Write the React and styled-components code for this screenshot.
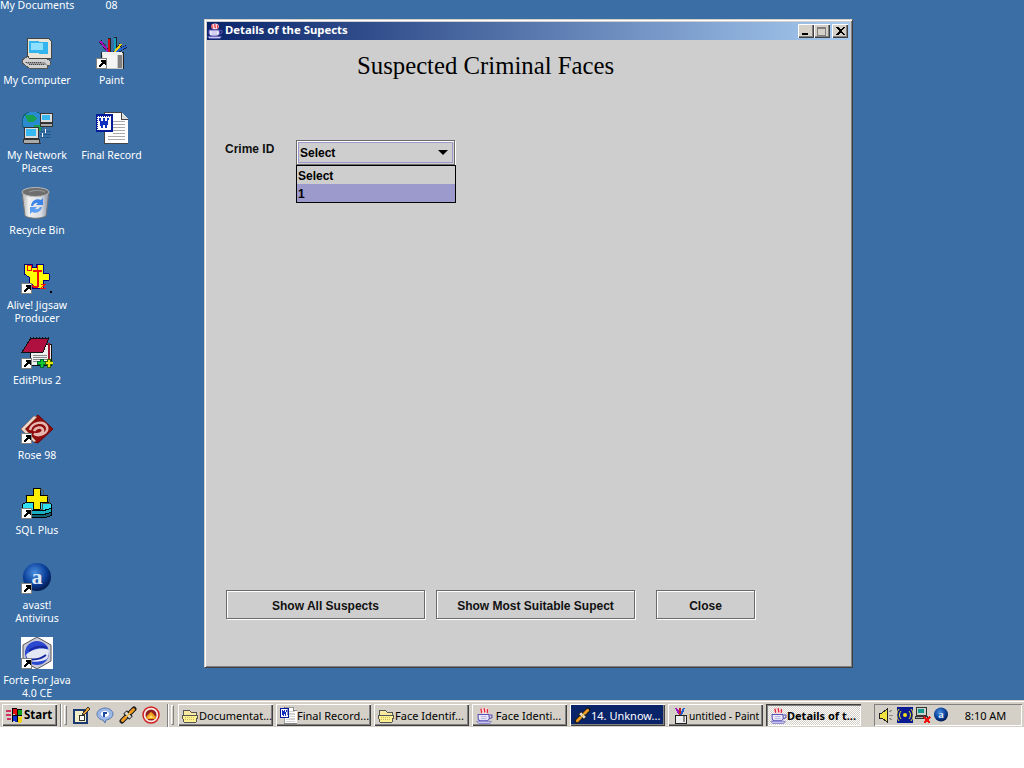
import React from "react";
import styled, { createGlobalStyle } from "styled-components";

const UI = `"Noto Sans", "DejaVu Sans", sans-serif`;

const Global = createGlobalStyle`
  html, body { margin: 0; padding: 0; background: #fff; }
  body { width: 1024px; height: 768px; overflow: hidden; font-family: ${UI}; }
`;

const Screen = styled.div`
  width: 1024px; height: 768px; display: flex; flex-direction: column; background: #fff; overflow: hidden;
`;
const Desktop = styled.div`
  position: relative; height: 700px; flex: none; background: #3a6ea5; overflow: hidden;
`;
const IconGrid = styled.div`
  display: grid; grid-template-columns: 74px 75px; grid-template-rows: repeat(10, 75px);
  grid-auto-flow: column; width: 149px; margin-top: -45px;
`;
const DeskItem = styled.div`
  display: flex; flex-direction: column; align-items: center; padding-top: 7px; box-sizing: border-box;
`;
const DeskIconBox = styled.div`
  position: relative; width: 32px; height: 32px; margin-bottom: 5px; flex: none;
  svg { display: block; }
`;
const DeskLabel = styled.div`
  width: 74px; color: #fff; text-align: center; font: 10.5px/13px ${UI}; white-space: pre;
`;
const ShortcutBadge = styled.span`
  position: absolute; left: 0; bottom: 0; width: 11px; height: 11px; background: #fff; display: flex;
  svg { display: block; }
`;

const Win = styled.div`
  position: absolute; left: 204px; top: 19px; width: 649px; height: 649px; box-sizing: border-box;
  background: #cecece; border: 1px solid; border-color: #d4d0c8 #404040 #404040 #d4d0c8;
  box-shadow: inset 1px 1px 0 #fff, inset -1px -1px 0 #808080;
  padding: 2px; display: flex; flex-direction: column;
`;
const TitleBar = styled.div`
  height: 18px; flex: none; display: flex; align-items: center; padding: 0 2px 0 0; gap: 2px;
  background: linear-gradient(90deg, #0a246a, #a6caf0);
`;
const TitleText = styled.div`
  flex: 1; color: #fff; font: bold 11.35px/16px ${UI}; white-space: nowrap; padding-bottom: 2px;
`;
const CaptionButtons = styled.div`display: flex; align-items: center;`;
const CaptionBtn = styled.div`
  width: 16px; height: 14px; box-sizing: border-box; background: #d4d0c8; display: flex;
  align-items: center; justify-content: center; margin-left: ${p => p.$gap || 0}px;
  box-shadow: inset 1px 1px 0 #fff, inset -1px -1px 0 #404040, inset -2px -2px 0 #808080;
  svg { display: block; }
`;
const Content = styled.div`
  flex: 1; display: flex; flex-direction: column; padding: 0 0 46px 18px; min-height: 0;
`;
const Heading = styled.h1`
  margin: 11px 0 0 132px; font: normal 24.75px/30px "Liberation Serif", serif; color: #000; white-space: nowrap;
`;
const FormRow = styled.div`
  display: flex; align-items: flex-start; margin-top: 59px;
`;
const FieldLabel = styled.div`
  width: 71px; font: bold 12px/14px "Liberation Sans", sans-serif; color: #111; padding-top: 2px;
`;
const ComboWrap = styled.div`position: relative; width: 159px;`;
const Combo = styled.div`
  height: 25px; box-sizing: border-box; border: 1px solid #6a6a6a; padding: 1px; box-shadow: inset 1px 1px 0 #fff, 1px 1px 0 #fff;
`;
const ComboInner = styled.div`
  height: 100%; box-sizing: border-box; border: 1px solid #9c99cc; display: flex; align-items: center;
  justify-content: space-between; padding: 0 4px 0 1px; font: bold 12px/14px "Liberation Sans", sans-serif; color: #000;
`;
const Arrow = styled.span`
  width: 0; height: 0; border-left: 5px solid transparent; border-right: 5px solid transparent; border-top: 5px solid #000;
`;
const Popup = styled.div`
  position: absolute; left: 0; top: 25px; width: 160px; height: 38px; box-sizing: border-box;
  border: 1px solid #000; background: #cecece;
`;
const PopupRow = styled.div`
  height: 18px; padding-left: 1px; font: bold 12px/20px "Liberation Sans", sans-serif; color: #000;
  background: ${p => (p.$active ? "#9c99cc" : "transparent")};
`;
const ButtonRow = styled.div`
  display: flex; margin-top: auto; margin-left: 1px;
`;
const JButton = styled.div`
  width: ${p => p.$w}px; height: 29px; box-sizing: border-box; margin-right: ${p => p.$mr || 0}px; padding-top: 2px;
  border: 1px solid #6a6a6a; box-shadow: inset 1px 1px 0 #fff, 1px 1px 0 #fff; display: flex;
  align-items: center; justify-content: center; font: bold 12px/14px "Liberation Sans", sans-serif; color: #111;
`;

const Taskbar = styled.div`
  height: 27px; flex: none; box-sizing: border-box; background: #d4d0c8; border-top: 1px solid #d4d0c8;
  box-shadow: inset 0 1px 0 #fff; display: flex; align-items: center; padding: 2px 2px 0 2px;
`;
const raised = `box-shadow: inset 1px 1px 0 #fff, inset -1px -1px 0 #404040, inset -2px -2px 0 #808080;`;
const StartBtn = styled.div`
  width: 55px; height: 22px; box-sizing: border-box; ${raised} display: flex; align-items: center; gap: 1px;
  padding-left: 4px; font: bold 11.5px/14px ${UI}; color: #000; flex: none;
  svg { display: block; }
`;
const Separator = styled.div`
  width: 2px; height: 23px; flex: none; margin-left: ${p => p.$ml}px; background: linear-gradient(90deg, #808080 50%, #fff 50%);
`;
const Grip = styled.div`
  width: 3px; height: 20px; flex: none; margin-left: ${p => p.$ml}px; box-sizing: border-box; border: 1px solid; border-color: #fff #808080 #808080 #fff;
`;
const Quick = styled.div`
  display: flex; gap: 5px; margin-left: 6px; flex: none; width: 88px; svg { display: block; }
`;
const TaskButtons = styled.div`display: flex; gap: 3px; margin-left: 4px; flex: none;`;
const TaskBtn = styled.div`
  width: 95px; height: 22px; box-sizing: border-box; display: flex; align-items: center; gap: 0;
  padding: 1px 0 0 4px; white-space: pre; overflow: hidden;
  font: ${p => (p.$pressed ? "bold " : "")}${p => p.$fs || 11}px/14px ${UI};
  color: ${p => (p.$flash ? "#fff" : "#000")};
  background: ${p => (p.$flash ? "#0a246a" : "#d4d0c8")};
  ${p => p.$pressed
    ? `background-color:#fff; background-image: conic-gradient(#d4d0c8 25%, #fff 0 50%, #d4d0c8 0 75%, #fff 0); background-size: 2px 2px;
       box-shadow: inset 1px 1px 0 #404040, inset 2px 2px 0 #808080, inset -1px -1px 0 #fff;`
    : raised}
  svg { display: block; flex: none; }
`;
const Tray = styled.div`
  width: 148px; height: 22px; margin-left: 13px; box-sizing: border-box; flex: none; display: flex; align-items: center;
  padding-left: 4px; box-shadow: inset 1px 1px 0 #808080, inset -1px -1px 0 #fff;
  svg { display: block; flex: none; }
`;
const TrayIcons = styled.div`display: flex; gap: 2px;`;
const Clock = styled.div`
  flex: 1; text-align: center; font: 11px/14px ${UI}; color: #000; padding: 1px 4px 0;
`;

const S = ({ size = 32, vb = 32, crisp = true, children }) => (
  <svg width={size} height={size} viewBox={`0 0 ${vb} ${vb}`} shapeRendering={crisp ? "crispEdges" : "auto"}>{children}</svg>
);

const Badge = () => (
  <ShortcutBadge>
    <svg width="11" height="11" viewBox="0 0 11 11" shapeRendering="crispEdges">
      <rect x=".5" y=".5" width="10" height="10" fill="#fff" stroke="#808080" />
      <path d="M5 2h5v5H8.500V5.500L4 9.500 2.500 8 6.500 4H5z" fill="#000" />
    </svg>
  </ShortcutBadge>
);

const Computer = () => (
  <S>
    <path d="M1 23l6-4h16l6 5v4l-3 1v2H8l-7-5z" fill="#cfcfcf" stroke="#555" />
    <path d="M6 1l22 1 2 2v17l-22 0-2-3z" fill="#e8e4d8" stroke="#444" />
    <path d="M8 4l19 1v12l-19-1z" fill="#35b5f0" />
    <path d="M10 6l12 0v7l-12 0z" fill="#8fe0ff" />
    <path d="M3 25h20l4 3H9z" fill="#999" />
    <path d="M5 25h16M8 27h15" stroke="#444" strokeDasharray="1 1" />
  </S>
);
const PaintIcon = () => (
  <S>
    <path d="M4 4l9 11M13 1v14M19 0v15M31 9L19 16M25 7l-7 9" stroke="#222" strokeWidth="3" />
    <path d="M4 4l9 11" stroke="#a010c0" strokeWidth="2" />
    <path d="M13 2v13" stroke="#d01010" strokeWidth="2" />
    <path d="M19 1v14" stroke="#10a0c0" strokeWidth="2" />
    <path d="M25 7l-7 9" stroke="#f0d010" strokeWidth="2" />
    <path d="M31 9L20 15" stroke="#2060d0" strokeWidth="2" />
    <rect x="5" y="15" width="22" height="17" fill="#c8c8c8" stroke="#222" />
    <rect x="7" y="18" width="14" height="13" fill="#f4f4f4" />
    <rect x="22" y="18" width="4" height="13" fill="#808080" />
    <rect x="6" y="15" width="20" height="3" fill="#eee" />
  </S>
);
const Network = () => (
  <S>
    <circle cx="12" cy="10" r="11" fill="#2a8ad0" stroke="#186080" />
    <path d="M4 3h9l3 4-4 3H7zM13 13h7v6h-7z" fill="#18a050" />
    <rect x="19" y="1" width="12" height="9" fill="#ddd" stroke="#333" />
    <rect x="21" y="3" width="8" height="5" fill="#38b8f0" />
    <path d="M19 11h12l1 3H19z" fill="#aaa" stroke="#333" />
    <rect x="3" y="15" width="14" height="11" fill="#ddd" stroke="#333" />
    <rect x="5" y="17" width="10" height="7" fill="#38b8f0" />
    <path d="M2 27h16l1 4H3z" fill="#aaa" stroke="#333" />
    <path d="M19 19h11M19 22h11M19 25h11" stroke="#1c5a90" />
    <path d="M24 17v4M21 21v4" stroke="#fff" />
  </S>
);
const WordDoc = ({ size = 32 }) => (
  <S size={size}>
    <path d="M8 0h17l7 7v24H8z" fill="#fff" stroke="#444" />
    <path d="M25 0v7h7" fill="#ddd" stroke="#444" />
    <path d="M17 9h12M17 12h12M17 15h12M17 18h12M17 21h12M12 24h17M12 27h17" stroke="#aaa" />
    <rect x="0" y="3" width="16" height="16" fill="#fff" stroke="#001a9c" strokeWidth="2" />
    <path d="M1 4h14M1 18h14M1 4v14M15 4v14" stroke="#102090" strokeDasharray="1 1" />
    <path d="M3 6l2 10h2l1-6 1 6h2l2-10h-2l-1 6-1-6H7L6 12 5 6z" fill="#1030c0" />
  </S>
);
const Recycle = () => (
  <S crisp={false}>
    <defs>
      <linearGradient id="binBody" x1="0" x2="1" y1="0" y2="0">
        <stop offset="0" stopColor="#a8a8a8" />
        <stop offset=".25" stopColor="#f0f0f0" />
        <stop offset=".7" stopColor="#d8dce4" />
        <stop offset="1" stopColor="#8a90a4" />
      </linearGradient>
    </defs>
    <path d="M1 5l3 24c6 3 15 3 21 0l3-24z" fill="url(#binBody)" stroke="#777" />
    <ellipse cx="14.500" cy="5" rx="13.500" ry="4.500" fill="#6e6e6e" stroke="#b8b8b8" />
    <path d="M8 5c5-2 12-2 16 0" fill="none" stroke="#9a9a9a" />
    <path d="M10 19a7 7 0 0 1 10-6l2-2v7h-7l2-2a4 4 0 0 0-5 3z" fill="#3c84e8" />
    <path d="M21 20a7 7 0 0 1-10 5l-2 2v-7h7l-2 2a4 4 0 0 0 5-2z" fill="#5a9cf0" />
  </S>
);
const Jigsaw = () => (
  <S>
    <path d="M3 2h8v3h4V2h7v9h4l2 1 1 3-1 3h-6v8H11v-4H8v-7L3 12z" fill="#ffff00" stroke="#000080" />
    <path d="M12 9h9M17 9v14c0 3-5 3-5 0" fill="none" stroke="#f01010" strokeWidth="2" />
    <path d="M6 3h4v5H6zM16 3v6M20 22h5l-5 4h5" fill="none" stroke="#f01010" />
    <rect x="29" y="29" width="2" height="2" fill="#000" />
  </S>
);
const EditPlus = () => (
  <S>
    <rect x="9" y="7" width="21" height="21" fill="#eee" stroke="#111" />
    <path d="M28 6v22" stroke="#a01030" strokeWidth="2" />
    <path d="M10 1h18l-6 14H1z" fill="#b01040" stroke="#111" />
    <path d="M9 0h20" stroke="#111" strokeDasharray="1 2" />
    <path d="M12 18h14M12 20h14M12 22h14M12 24h8" stroke="#888" />
    <path d="M16 24h3v-2h3v2h3v3h-3v3h-3v-3h-3z" fill="#10c830" stroke="#063" />
    <path d="M24 24h2v-2h3v2h3v3h-3v3h-3v-3h-2z" fill="#e8e810" stroke="#360" />
  </S>
);
const Rose = () => (
  <S crisp={false}>
    <path d="M17 3l15 14-15 14-4-1L0 17z" fill="#8e0e0e" stroke="#6a0808" />
    <path d="M0 17L13 4l3 1L4 17l11 12-2 1z" fill="#ecd8c8" stroke="#9a6a50" strokeWidth=".5" />
    <path d="M9 18c2-8 14-10 17-3 2 6-8 10-13 7 5 1 9-1 9-4-1-4-7-3-9 1" fill="none" stroke="#e8b8b0" strokeWidth="2.500" />
  </S>
);
const SqlPlus = () => (
  <S>
    <ellipse cx="16" cy="27" rx="15" ry="4" fill="#106070" stroke="#000" />
    <ellipse cx="16" cy="23" rx="15" ry="5" fill="#18b0c0" stroke="#000" />
    <ellipse cx="16" cy="19" rx="15" ry="5" fill="#30e0f0" stroke="#000" />
    <path d="M12 1h7v7h7v7h-7v7h-7v-7H5V8h7z" fill="#ffee00" stroke="#000" />
    <path d="M19 2l3 1v5M26 9l2 1v6l-7 0M19 22l2 0v-6" fill="none" stroke="#555" />
  </S>
);
const Avast = ({ size = 32 }) => (
  <svg width={size} height={size} viewBox="0 0 32 32">
    <defs>
      <radialGradient id={`av${size}`} cx=".42" cy=".35" r=".7">
        <stop offset="0" stopColor="#4a90e0" />
        <stop offset=".6" stopColor="#0a3e98" />
        <stop offset="1" stopColor="#02123c" />
      </radialGradient>
    </defs>
    <circle cx="16" cy="15" r="14" fill={`url(#av${size})`} />
    <text x="16" y="22" textAnchor="middle" fontFamily="Liberation Serif, serif" fontWeight="bold" fontSize="22" fill="#dfe9f5">a</text>
  </svg>
);
const Forte = () => (
  <S crisp={false}>
    <rect width="32" height="32" fill="#fff" />
    <path d="M16 0l14 8v16l-14 8-14-8V8z" fill="#c8c8d8" stroke="#555" />
    <circle cx="16" cy="16" r="12" fill="#2a48d0" />
    <path d="M5 18c5-6 16-8 23-5 0 5-1 7-2 9-6 3-14 4-19 1z" fill="#e4e8f4" />
    <path d="M8 14c5-4 12-5 18-3M7 22c6 1 13 0 18-4" fill="none" stroke="#1828a0" strokeWidth="2" />
  </S>
);
const JavaCup = ({ size = 16 }) => (
  <S size={size} crisp={false}>
    <path d="M8 6c0-3 4-5 8-5 5 0 8 2 8 6s-3 6-8 6c-5 0-8-3-8-7z" fill="#f6d8dc" />
    <path d="M10 3c-2 3 2 5 0 8M16 2c-2 3 2 5 0 8M22 4c-2 2 1 4-1 7" fill="none" stroke="#e02838" strokeWidth="2.500" />
    <path d="M4 14h20l1 6c0 4-4 6-7 6h-8c-4 0-6-3-6-6z" fill="#ecebfa" stroke="#5a50b8" strokeWidth="2" />
    <path d="M25 15h5v5l-5 2" fill="none" stroke="#5a50b8" strokeWidth="2" />
    <path d="M1 27h28l-3 4H5z" fill="#c8c6f0" stroke="#5a50b8" />
    <path d="M9 18h11M9 22h11" stroke="#a8a4e0" strokeWidth="1.500" />
  </S>
);

const WinLogo = () => (
  <S size={17} vb={17}>
    <path d="M0 3h5v2H0zM0 7h5v2H0zM1 11h4v2H1z" fill="#d03060" />
    <path d="M6 2c2-2 3 0 5 0v6c-2 0-3-2-5 0z" fill="#e01010" />
    <path d="M11 2c2 1 3 1 5 0v6c-2 1-3 1-5 0z" fill="#10a020" />
    <path d="M6 9c2-2 3 0 5 0v6c-2 0-3-2-5 0z" fill="#1030d0" />
    <path d="M11 9c2 1 3 1 5 0v6c-2 1-3 1-5 0z" fill="#f0d010" />
    <path d="M6 2v13M11 2v13M6 8.500h10M6 2c2-2 3 0 5 0 2 1 3 1 5 0" fill="none" stroke="#000" />
  </S>
);
const QlDesktop = () => (
  <S size={18} vb={18}>
    <path d="M1 4h13v13H1z" fill="#f4eec8" stroke="#1a3a70" strokeWidth="2" />
    <path d="M6 9h5v5H6z" fill="#fff" stroke="#333" />
    <path d="M9 8l6-7 2 2-6 6z" fill="#f0a030" stroke="#333" />
  </S>
);
const QlReal = () => (
  <S size={18} vb={18} crisp={false}>
    <path d="M1 8c0-4 5-6 8-6s8 2 8 6-5 6-7 6l-1 3-2-3c-2 0-6-2-6-6z" fill="#9cb8e8" stroke="#5a78a8" />
    <ellipse cx="9" cy="8" rx="4" ry="3" fill="#fff" />
    <path d="M7 6h4v2H9v3H7z" fill="#1a4aa0" />
  </S>
);
const Flash = ({ size = 18 }) => (
  <S size={size} vb={18} crisp={false}>
    <path d="M3 15L15 3" stroke="#1a1a1a" strokeWidth="5" strokeLinecap="round" />
    <path d="M3.500 14.500L14.500 3.500" stroke="#f09a20" strokeWidth="3" strokeLinecap="round" />
    <path d="M6 6l6 6" stroke="#1a1a1a" strokeWidth="5" />
    <path d="M6.500 6.500l5 5" stroke="#d8d8d8" strokeWidth="3" />
    <path d="M7 11l4-4" stroke="#f8c040" strokeWidth="1.500" />
  </S>
);
const QlFire = () => (
  <S size={18} vb={18} crisp={false}>
    <circle cx="9" cy="9" r="8" fill="#f8e8e8" stroke="#d02020" strokeWidth="1.500" />
    <circle cx="9" cy="9" r="5.500" fill="#902020" />
    <path d="M4 11c2-2 3-4 5-5 2 1 3 3 5 5v2H5z" fill="#f0a020" />
    <path d="M6 12c1-1 2-2 3-3 1 1 2 2 3 3z" fill="#ffe060" />
  </S>
);
const Folder = () => (
  <S size={17} vb={17}>
    <path d="M1 5V3h6l2 2h5v3H1z" fill="#f8e8a0" stroke="#555" />
    <path d="M0 8h12l4 0-2 7H2z" fill="#fff090" stroke="#555" />
    <path d="M3 10h10M3 12h9" stroke="#c8b860" strokeDasharray="1 1" />
  </S>
);
const MiniPaint = () => (
  <S size={17} vb={17}>
    <path d="M4 1l4 7" stroke="#a010c0" strokeWidth="2" />
    <path d="M8 1v7" stroke="#c02020" strokeWidth="2" />
    <path d="M12 1L9 8" stroke="#2060d0" strokeWidth="2" />
    <rect x="3" y="8" width="11" height="8" fill="#eee" stroke="#222" />
    <rect x="11" y="9" width="2" height="6" fill="#888" />
  </S>
);
const Speaker = () => (
  <S size={17} vb={17}>
    <path d="M1 6h3l5-4v13l-5-4H1z" fill="#f0e040" stroke="#222" />
    <path d="M11 5l3-2M11 8h4M11 11l3 2" stroke="#8a8a8a" />
  </S>
);
const TrayWave = () => (
  <S size={16} vb={16} crisp={false}>
    <rect width="16" height="16" fill="#0a1a90" />
    <circle cx="8" cy="8" r="2" fill="#f0e020" />
    <path d="M4 4a6 6 0 0 0 0 8M12 4a6 6 0 0 1 0 8M2 2a9 9 0 0 0 0 12M14 2a9 9 0 0 1 0 12" fill="none" stroke="#f0e020" />
  </S>
);
const TrayNet = () => (
  <S size={16} vb={16}>
    <rect x="1" y="0" width="10" height="8" fill="#c8d0c8" stroke="#333" />
    <rect x="3" y="2" width="6" height="4" fill="#109890" />
    <rect x="0" y="9" width="12" height="2" fill="#aaa" stroke="#333" />
    <path d="M9 10l6 6M15 10l-6 6" stroke="#f01010" strokeWidth="2" />
  </S>
);

const desktopItems = [
  { label: "My Documents" },
  { label: "My Computer", icon: <Computer /> },
  { label: "My Network\nPlaces", icon: <Network /> },
  { label: "Recycle Bin", icon: <Recycle /> },
  { label: "Alive! Jigsaw\nProducer", icon: <Jigsaw />, link: true },
  { label: "EditPlus 2", icon: <EditPlus />, link: true },
  { label: "Rose 98", icon: <Rose />, link: true },
  { label: "SQL Plus", icon: <SqlPlus />, link: true },
  { label: "avast!\nAntivirus", icon: <Avast />, link: true },
  { label: "Forte For Java\n4.0 CE", icon: <Forte />, link: true },
  { label: "08" },
  { label: "Paint", icon: <PaintIcon />, link: true },
  { label: "Final Record", icon: <WordDoc /> },
];

const tasks = [
  { label: "Documentat...", icon: <Folder /> },
  { label: "Final Record...", icon: <WordDoc size={17} /> },
  { label: "Face Identif...", icon: <Folder /> },
  { label: " Face Identi...", icon: <JavaCup size={17} /> },
  { label: "14. Unknow...", icon: <Flash size={17} />, flash: true },
  { label: "untitled - Paint", icon: <MiniPaint />, fs: 10.2 },
  { label: "Details of t...", icon: <JavaCup size={17} />, pressed: true },
];

export default function App() {
  return (
    <Screen>
      <Global />
      <Desktop>
        <IconGrid>
          {desktopItems.map(it => (
            <DeskItem key={it.label}>
              <DeskIconBox>
                {it.icon}
                {it.link && <Badge />}
              </DeskIconBox>
              <DeskLabel>{it.label}</DeskLabel>
            </DeskItem>
          ))}
        </IconGrid>
        <Win>
          <TitleBar>
            <JavaCup size={16} />
            <TitleText>Details of the Supects</TitleText>
            <CaptionButtons>
              <CaptionBtn>
                <svg width="8" height="8" viewBox="0 0 8 8" shapeRendering="crispEdges"><rect x="0" y="6" width="6" height="2" fill="#000" /></svg>
              </CaptionBtn>
              <CaptionBtn>
                <svg width="10" height="9" viewBox="0 0 10 9" shapeRendering="crispEdges"><path d="M.5 1.500h8v7h-8zM0 .5h9" fill="none" stroke="#808080" /></svg>
              </CaptionBtn>
              <CaptionBtn $gap={2}>
                <svg width="9" height="8" viewBox="0 0 9 8" shapeRendering="crispEdges"><path d="M0 0h2l2 2h1l2-2h2L6 3.500V4.500L9 8H7L5 6H4L2 8H0l3-3.500V3.500z" fill="#000" /></svg>
              </CaptionBtn>
            </CaptionButtons>
          </TitleBar>
          <Content>
            <Heading>Suspected Criminal Faces</Heading>
            <FormRow>
              <FieldLabel>Crime ID</FieldLabel>
              <ComboWrap>
                <Combo>
                  <ComboInner>
                    <span>Select</span>
                    <Arrow />
                  </ComboInner>
                </Combo>
                <Popup>
                  <PopupRow>Select</PopupRow>
                  <PopupRow $active>1</PopupRow>
                </Popup>
              </ComboWrap>
            </FormRow>
            <ButtonRow>
              <JButton $w={199} $mr={11}>Show All Suspects</JButton>
              <JButton $w={199} $mr={21}>Show Most Suitable Supect</JButton>
              <JButton $w={99}>Close</JButton>
            </ButtonRow>
          </Content>
        </Win>
      </Desktop>
      <Taskbar>
        <StartBtn><WinLogo />Start</StartBtn>
        <Separator $ml={3} />
        <Grip $ml={2} />
        <Quick>
          <QlDesktop />
          <QlReal />
          <Flash />
          <QlFire />
        </Quick>
        <Separator $ml={6} />
        <Grip $ml={2} />
        <TaskButtons>
          {tasks.map(t => (
            <TaskBtn key={t.label} $flash={t.flash} $pressed={t.pressed} $fs={t.fs}>
              {t.icon}
              {t.label}
            </TaskBtn>
          ))}
        </TaskButtons>
        <Tray>
          <TrayIcons>
            <Speaker />
            <TrayWave />
            <TrayNet />
            <Avast size={16} />
          </TrayIcons>
          <Clock>8:10 AM</Clock>
        </Tray>
      </Taskbar>
    </Screen>
  );
}
